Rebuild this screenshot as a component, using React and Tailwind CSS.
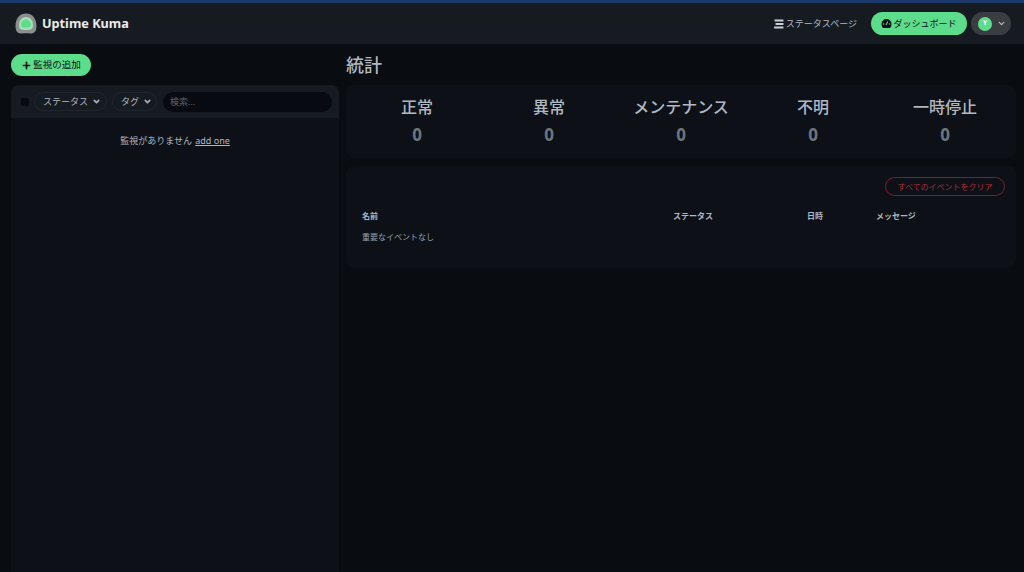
import { ChevronDown, Plus } from 'lucide-react';

const font = { fontFamily: '"Noto Sans", "Noto Sans CJK JP", sans-serif' };

const Logo = () => (
    <svg width="24" height="24" viewBox="0 0 24 24">
        <path d="M12 1.5C18 1.5 22.5 6 22.5 14C22.5 20 20 21.5 16 21.5C13.5 21 10.5 21 8 21.5C4 21.5 1.5 20 1.5 14C1.5 6 6 1.5 12 1.5Z" fill="#8a8f8d" />
        <path d="M12 5C16.5 5 19 8.5 19 13.5C19 17.5 16 18 12 18C8 18 5 17.5 5 13.5C5 8.5 7.5 5 12 5Z" fill="#a8ddb9" />
        <path d="M12 7.5C15 7.5 17 10 17 13.5C17 15 15 15.5 12 15.5C9 15.5 7 15 7 13.5C7 10 9 7.5 12 7.5Z" fill="#5cdd8b" />
    </svg>
);

const ListIcon = () => (
    <svg width="10" height="10" viewBox="0 0 10 10" fill="#c9ced4">
        <rect x="0.5" y="0.5" width="9" height="2" rx="0.5" />
        <rect x="1.5" y="4" width="8" height="2" rx="0.5" />
        <rect x="0" y="7.5" width="9.5" height="2" rx="0.5" />
    </svg>
);

const Gauge = () => (
    <svg width="11" height="11" viewBox="0 0 11 11">
        <path d="M5.5 1A5 5 0 0 0 .5 6C.5 7.5 1 9 2 10H9C10 9 10.5 7.5 10.5 6A5 5 0 0 0 5.5 1Z" fill="#0d1117" />
        <path d="M5 7L6.8 3.4" stroke="#5cdd8b" strokeWidth="1.1" />
        <circle cx="2.6" cy="6" r=".7" fill="#5cdd8b" />
        <circle cx="8.6" cy="6" r=".7" fill="#5cdd8b" />
    </svg>
);

const FilterPill = ({ label, width }) => (
    <button className={`flex h-[19px] shrink-0 items-center gap-[4px] rounded-full border border-[#20262e] pl-[8px] text-[9px] text-[#b0b6bd] ${width}`}>
        {label}
        <ChevronDown size={9} strokeWidth={4} />
    </button>
);

const Stat = ({ label }) => (
    <div className="flex flex-1 flex-col items-center">
        <h3 className="text-[16px] leading-[22px] font-medium text-[#b1b8c0]">{label}</h3>
        <span className="mt-[6px] text-[17px] leading-[22px] font-bold text-[#6c757d]">0</span>
    </div>
);

const App = () => {
    return (
        <div style={font} className="flex h-[572px] w-[1024px] flex-col overflow-hidden bg-[#090c10] text-[#b1b8c0]">
            <div className="h-[3px] shrink-0 bg-[#1b3a6b]" />
            <header className="flex h-[41px] shrink-0 items-center justify-between bg-[#161b22] pr-[13px] pl-[14px]">
                <div className="flex items-center gap-[4px]">
                    <Logo />
                    <span className="text-[12.7px] font-bold text-[#e9ecef]">Uptime Kuma</span>
                </div>
                <div className="flex items-center">
                    <a className="mr-[14px] flex items-center gap-[2px] text-[9px] text-[#b1b8c0]">
                        <ListIcon />
                        ステータスページ
                    </a>
                    <button className="mr-[4px] flex h-[23px] w-[96px] items-center justify-center gap-[1px] rounded-full bg-[#5cdd8b] text-[9px] text-[#0d1117]">
                        <Gauge />
                        ダッシュボード
                    </button>
                    <div className="flex h-[23px] w-[40px] items-center gap-[5px] rounded-full bg-[#393c41] pl-[7px]">
                        <span className="flex h-[14px] w-[14px] items-center justify-center rounded-full bg-[#5cdd8b] text-[7px] font-bold text-white">Y</span>
                        <ChevronDown size={9} strokeWidth={3.5} className="text-[#b1b8c0]" />
                    </div>
                </div>
            </header>
            <main className="flex min-h-0 flex-1 pr-[8px] pl-[11px]">
                <section className="flex w-[328px] shrink-0 flex-col pt-[10px]">
                    <button className="flex h-[22px] w-[80px] items-center justify-center gap-[1px] rounded-full bg-[#5cdd8b] text-[9.5px] text-[#0d1117]">
                        <Plus size={11} strokeWidth={3.5} />
                        監視の追加
                    </button>
                    <div className="mt-[9px] flex min-h-0 flex-1 flex-col rounded-t-[8px] bg-[#0d1117]">
                        <div className="flex h-[33px] shrink-0 items-center rounded-t-[8px] bg-[#161b22] pr-[7px] pl-[10px]">
                            <span className="mr-[5px] h-[8px] w-[8px] rounded-[2px] bg-[#070a10]" />
                            <FilterPill label="ステータス" width="w-[73px]" />
                            <span className="w-[5px] shrink-0" />
                            <FilterPill label="タグ" width="w-[45px]" />
                            <input
                                placeholder="検索..."
                                className="ml-[6px] h-[20px] min-w-0 flex-1 rounded-full bg-[#070a10] px-[7px] text-[9px] outline-none placeholder:text-[#5c636a]"
                            />
                        </div>
                        <p className="mt-[15px] text-center text-[9px] leading-[15px] text-[#b1b8c0]">
                            監視がありません <a className="ml-[1px] underline">add one</a>
                        </p>
                    </div>
                </section>
                <section className="ml-[7px] min-w-0 flex-1 pt-[7px]">
                    <h1 className="text-[18px] leading-[28px] font-medium text-[#b1b8c0]">統計</h1>
                    <div className="mt-[6px] flex h-[73px] items-start rounded-[8px] bg-[#0d1117] px-[5px] pt-[11px]">
                        <Stat label="正常" />
                        <Stat label="異常" />
                        <Stat label="メンテナンス" />
                        <Stat label="不明" />
                        <Stat label="一時停止" />
                    </div>
                    <div className="mt-[8px] h-[102px] rounded-[8px] bg-[#0d1117] pt-[11px] pr-[11px] pl-[16px]">
                        <div className="flex justify-end">
                            <button className="flex h-[19px] w-[120px] items-center justify-center rounded-full border border-[#7a1f2b] text-[8px] text-[#b02a37]">
                                すべてのイベントをクリア
                            </button>
                        </div>
                        <div className="mt-[14px] grid grid-cols-[311px_134px_69px_1fr] text-[8px] leading-[12px] font-bold text-[#b1b8c0]">
                            <span>名前</span>
                            <span>ステータス</span>
                            <span>日時</span>
                            <span>メッセージ</span>
                        </div>
                        <p className="mt-[8px] text-[8px] leading-[13px] text-[#9aa1a8]">重要なイベントなし</p>
                    </div>
                </section>
            </main>
        </div>
    );
};

export default App;
